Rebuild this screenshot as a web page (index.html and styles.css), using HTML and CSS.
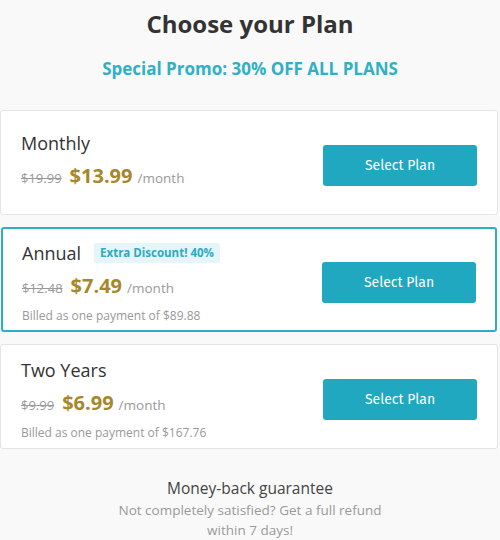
FILE: index.html
```html
<!DOCTYPE html>
<html>
<head>
<meta charset="utf-8">
<link rel="stylesheet" href="styles.css">
</head>
<body>
<div class="page">
  <header class="head">
    <h1 class="title">Choose your Plan</h1>
    <p class="promo">Special Promo: 30% OFF ALL PLANS</p>
  </header>
  <div class="plans">
    <div class="plan">
      <div class="info">
        <div class="name-row"><span class="name">Monthly</span></div>
        <div class="price-row"><span class="old">$19.99</span><span class="new">$13.99</span><span class="per">/month</span></div>
      </div>
      <button class="btn">Select Plan</button>
    </div>
    <div class="plan active">
      <div class="info">
        <div class="name-row"><span class="name">Annual</span><span class="badge">Extra Discount! 40%</span></div>
        <div class="price-row"><span class="old">$12.48</span><span class="new">$7.49</span><span class="per">/month</span></div>
        <div class="billed">Billed as one payment of $89.88</div>
      </div>
      <button class="btn">Select Plan</button>
    </div>
    <div class="plan">
      <div class="info">
        <div class="name-row"><span class="name">Two Years</span></div>
        <div class="price-row"><span class="old">$9.99</span><span class="new">$6.99</span><span class="per">/month</span></div>
        <div class="billed">Billed as one payment of $167.76</div>
      </div>
      <button class="btn">Select Plan</button>
    </div>
  </div>
  <footer class="guarantee">
    <div class="g-title">Money-back guarantee</div>
    <div class="g-text">Not completely satisfied? Get a full refund<br>within 7 days!</div>
  </footer>
</div>
</body>
</html>
```
FILE: styles.css
```css
* { box-sizing: border-box; }
html, body { margin: 0; padding: 0; }
body {
  background: #f9f9f9;
  font-family: "Open Sans", "Noto Sans", sans-serif;
  color: #333;
  width: 500px;
  height: 540px;
  overflow: hidden;
}
.head {
  text-align: center;
  padding-top: 7px;
  height: 110px;
}
.title {
  margin: 0;
  font-size: 24px;
  font-weight: 700;
  line-height: 34px;
  color: #333;
}
.promo {
  margin: 17px 0 0;
  font-size: 17px;
  font-weight: 700;
  line-height: 22px;
  color: #2fb0c5;
}
.plans {
  display: flex;
  flex-direction: column;
  gap: 12px;
  padding-right: 2px;
}
.plan {
  height: 105px;
  background: #fff;
  border: 1px solid #e4e4e4;
  border-radius: 3px;
  display: flex;
  align-items: center;
  justify-content: space-between;
  padding: 0 20px 6px 20px;
}
.plan.active {
  border: 2px solid #2eaec3;
  margin: 0 1px;
  padding: 0 19px 6px 19px;
}
.name-row {
  display: flex;
  align-items: center;
  gap: 13px;
}
.name {
  font-size: 18px;
  line-height: 24px;
  color: #333;
}
.badge {
  background: #e5f5f9;
  color: #2aabc1;
  font-size: 11.5px;
  font-weight: 700;
  padding: 1px 6px;
  line-height: 18px;
  border-radius: 2px;
}
.price-row {
  margin-top: 8px;
  display: flex;
  align-items: baseline;
}
.old {
  font-size: 13px;
  color: #999;
  text-decoration: line-through;
  margin-right: 8px;
}
.new {
  font-size: 20px;
  font-weight: 700;
  color: #a7872a;
  margin-right: 5px;
  line-height: 26px;
}
.per {
  font-size: 13.5px;
  color: #999;
}
.billed {
  margin-top: 9px;
  margin-bottom: -11px;
  font-size: 12px;
  color: #999;
  line-height: 16px;
}
.btn {
  width: 154px;
  height: 41px;
  border: none;
  border-radius: 3px;
  background: #1fa8bf;
  color: #fff;
  font-family: "Fira Sans", "Noto Sans", "Open Sans", sans-serif;
  font-size: 14px;
  margin-top: 11px;
}
.guarantee {
  text-align: center;
  padding-top: 27px;
}
.g-title {
  font-size: 15.5px;
  line-height: 24px;
  color: #444;
}
.g-text {
  font-size: 13.5px;
  line-height: 20px;
  color: #999;
}
```
